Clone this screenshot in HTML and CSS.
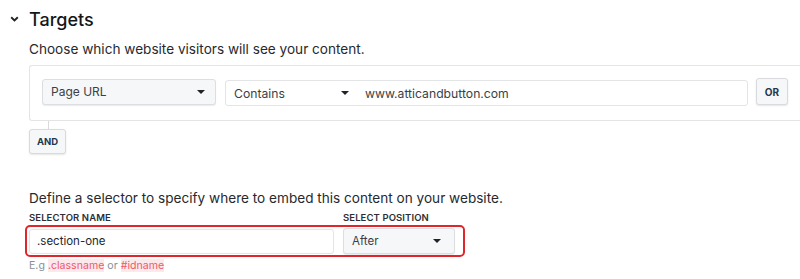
FILE: index.html
```html
<!DOCTYPE html>
<html>
<head>
<meta charset="utf-8">
<link rel="stylesheet" href="styles.css">
</head>
<body>
<div class="page">
  <div class="header">
    <svg class="chev" width="9" height="6" viewBox="0 0 9 6"><path d="M1.2 1.2 L4.5 4.4 L7.8 1.2" fill="none" stroke="#1f2328" stroke-width="1.9"/></svg>
    <h1 class="title">Targets</h1>
  </div>
  <div class="content">
    <p class="desc">Choose which website visitors will see your content.</p>
    <div class="rulebox">
      <div class="sel sel-page"><span>Page URL</span><span class="caret"></span></div>
      <div class="cond">
        <div class="cond-sel"><span>Contains</span><span class="caret"></span></div>
        <span class="cond-val">www.atticandbutton.com</span>
      </div>
      <button class="btn btn-or">OR</button>
    </div>
    <div class="connector"></div>
    <button class="btn btn-and">AND</button>
    <p class="desc desc2">Define a selector to specify where to embed this content on your website.</p>
    <div class="labels">
      <span class="label label-name">SELECTOR NAME</span>
      <span class="label">SELECT POSITION</span>
    </div>
    <div class="selector-row">
      <div class="input-name">.section-one</div>
      <div class="sel sel-pos"><span>After</span><span class="caret"></span></div>
    </div>
    <p class="hint">E.g <span class="tag">.classname</span> or <span class="tag">#idname</span></p>
  </div>
</div>
</body>
</html>
```
FILE: styles.css
```css
* { box-sizing: border-box; }
html, body { margin: 0; padding: 0; background: #fff; }
body { font-family: Inter, "Noto Sans", sans-serif; color: #1f2328; overflow: hidden; width: 800px; height: 279px; }
.page { padding: 6px 0 0 0; }
.header { display: flex; align-items: center; height: 26px; }
.chev { margin-left: 10px; margin-right: 10px; margin-top: 0; }
.title { font-size: 18px; font-weight: 500; margin: 0; color: #14171a; }
.content { padding-left: 29px; }
.desc { margin: 0; font-size: 13.6px; line-height: 18px; margin-top: 8px; color: #26292e; }
.rulebox { margin-top: 7px; width: 790px; height: 56px; border: 1px solid #e3e4e6; border-right: none; border-radius: 3px 0 0 3px; display: flex; align-items: center; padding-left: 12px; }
.sel { display: flex; align-items: center; justify-content: space-between; background: #f6f7f8; border: 1px solid #dcdee1; border-radius: 3px; box-shadow: 0 1px 1px rgba(0,0,0,0.08); font-size: 12px; color: #3b3f45; }
.sel-page { width: 174px; height: 26px; padding: 0 10px 0 8px; margin-top: -3px; }
.caret { width: 0; height: 0; border-left: 4px solid transparent; border-right: 4px solid transparent; border-top: 4px solid #1f2328; }
.cond { margin-left: 9px; width: 523px; height: 26px; border: 1px solid #e3e4e6; border-radius: 3px; display: flex; align-items: center; font-size: 12.2px; color: #3b3f45; }
.cond-sel { width: 130px; display: flex; align-items: center; justify-content: space-between; padding: 0 7px 0 8px; }
.cond-val { margin-left: 9px; }
.btn { font-family: Inter, "Noto Sans", sans-serif; font-weight: 700; font-size: 9.5px; color: #23374d; background: #f6f7f8; border: 1px solid #d8dadd; border-radius: 3px; box-shadow: 0 1px 2px rgba(0,0,0,0.1); padding: 0; }
.btn-or { width: 32px; height: 27px; margin-left: 8px; margin-top: -3px; font-size: 10px; }
.connector { margin-left: 19px; width: 1px; height: 8px; background: #d8dadd; }
.btn-and { width: 37px; height: 25px; display: block; }
.desc2 { margin-top: 35px; }
.labels { display: flex; margin-top: 5px; font-size: 9.5px; font-weight: 600; color: #2b2f35; letter-spacing: 0.1px; line-height: 12px; }
.label-name { width: 314px; }
.selector-row { margin-top: 1px; margin-left: -4px; width: 440px; height: 32px; border: 2px solid #e0262b; border-radius: 5px; display: flex; align-items: center; padding-left: 2px; }
.input-name { width: 305px; height: 25px; border: 1px solid #e3e4e6; border-radius: 3px; font-size: 11.5px; color: #24272b; display: flex; align-items: center; padding-left: 7px; }
.sel-pos { width: 112px; height: 26px; margin-left: 9px; padding: 0 13px 0 8px; font-size: 11.5px; color: #3b3f45; }
.hint { margin: 0; margin-top: 2px; font-size: 10.6px; color: #8a8f96; line-height: 13px; }
.tag { color: #ee5a6a; background: #fde8ec; }
```
